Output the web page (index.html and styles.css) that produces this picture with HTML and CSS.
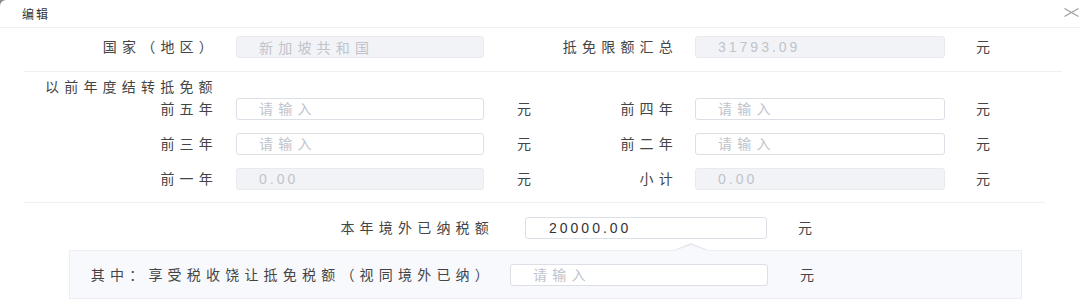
FILE: index.html
```html
<!DOCTYPE html>
<html lang="zh-CN">
<head>
    <meta charset="UTF-8">
    <meta name="viewport" content="width=device-width, initial-scale=1.0">
    <title>编辑</title>
    <link rel="stylesheet" href="styles.css">
</head>
<body>
    <div class="dialog">
        <!-- 标题栏 -->
        <div class="dialog-header">
            <span class="dialog-title">编辑</span>
            <button class="close-btn" type="button" aria-label="关闭">
                <svg width="15" height="9" viewBox="0 0 15 9">
                    <path d="M0.5 0.5 L14.5 8.5 M14.5 0.5 L0.5 8.5" stroke="#9a9ca3" stroke-width="1.1" fill="none"/>
                </svg>
            </button>
        </div>

        <div class="dialog-body">
            <!-- 国家与限额 -->
            <div class="form-grid">
                <label class="form-label">国家（地区）</label>
                <input class="form-input" type="text" value="新加坡共和国" disabled>
                <span></span>
                <label class="form-label">抵免限额汇总</label>
                <input class="form-input is-num" type="text" value="31793.09" disabled>
                <span class="unit">元</span>
            </div>

            <div class="divider"></div>

            <!-- 以前年度结转 -->
            <div class="section-title">以前年度结转抵免额</div>
            <div class="form-grid rows">
                <label class="form-label">前五年</label>
                <input class="form-input" type="text" placeholder="请输入">
                <span class="unit">元</span>
                <label class="form-label">前四年</label>
                <input class="form-input" type="text" placeholder="请输入">
                <span class="unit">元</span>

                <label class="form-label">前三年</label>
                <input class="form-input" type="text" placeholder="请输入">
                <span class="unit">元</span>
                <label class="form-label">前二年</label>
                <input class="form-input" type="text" placeholder="请输入">
                <span class="unit">元</span>

                <label class="form-label">前一年</label>
                <input class="form-input is-num" type="text" value="0.00" disabled>
                <span class="unit">元</span>
                <label class="form-label">小计</label>
                <input class="form-input is-num" type="text" value="0.00" disabled>
                <span class="unit">元</span>
            </div>

            <div class="divider divider-short"></div>

            <!-- 本年境外已纳税额 -->
            <div class="tax-row">
                <label class="form-label">本年境外已纳税额</label>
                <input class="form-input is-num is-filled" type="text" value="20000.00">
                <span class="unit">元</span>
            </div>

            <div class="sub-panel">
                <label class="form-label">其中：享受税收饶让抵免税额（视同境外已纳）</label>
                <input class="form-input" type="text" placeholder="请输入">
                <span class="unit">元</span>
            </div>
        </div>
    </div>
</body>
</html>
```

FILE: styles.css
```css
:root {
    --text-color: #444;
    --muted-color: #c0c4cc;
    --border-color: #dcdfe6;
    --line-color: #eef0f4;
    --disabled-bg: #f2f3f6;
    --panel-bg: #f8f9fc;
}

* {
    box-sizing: border-box;
    margin: 0;
    padding: 0;
}

html {
    background: #8a8a8a;
}

body {
    font-family: "Liberation Sans", "Noto Sans CJK SC", sans-serif;
    font-size: 14px;
    color: var(--text-color);
}

.dialog {
    background: #fff;
    min-height: 100vh;
    border-top-left-radius: 6px;
}

.dialog-header {
    height: 28px;
    display: flex;
    align-items: center;
    justify-content: space-between;
    padding-left: 22px;
    border-bottom: 1px solid var(--line-color);
}

.dialog-title {
    font-size: 12px;
    letter-spacing: 2px;
    color: #333;
}

.close-btn {
    border: none;
    background: none;
    display: flex;
    align-items: center;
    padding: 0 1px 2px 0;
    cursor: pointer;
}

.dialog-body {
    padding-top: 8px;
}

/* 两列表单 */
.form-grid {
    display: grid;
    grid-template-columns: 236px 248px 125px 86px 250px 1fr;
    align-items: center;
}

.form-grid.rows {
    row-gap: 13px;
    margin-top: 3px;
}

.form-label {
    display: flex;
    justify-content: flex-end;
    padding-right: 18px;
    letter-spacing: 5.2px;
    line-height: 16px;
    white-space: nowrap;
}

.form-grid .form-label:nth-child(6n+4) {
    padding-right: 17px;
}

.form-input {
    height: 22px;
    width: 100%;
    border: 1px solid var(--border-color);
    border-radius: 3px;
    background: #fff;
    padding-left: 22px;
    font-family: inherit;
    font-size: 14px;
    letter-spacing: 5.2px;
    color: #333;
    outline: none;
}

.form-input::placeholder {
    color: var(--muted-color);
}

.form-input:disabled {
    background: var(--disabled-bg);
    border-color: #e8eaef;
    color: var(--muted-color);
}

.form-input.is-num {
    letter-spacing: 3px;
}

.form-input.is-filled {
    color: #333;
}

.unit {
    padding-left: 33px;
    line-height: 16px;
}

.form-grid .unit:nth-child(6n) {
    padding-left: 31px;
}

.divider {
    height: 1px;
    background: var(--line-color);
    margin: 13px 18px 0 24px;
}

.divider-short {
    margin: 12px 35px 0 24px;
}

.section-title {
    margin: 7px 0 0 45px;
    line-height: 16px;
    letter-spacing: 5.2px;
}

/* 本年境外已纳税额 */
.tax-row {
    display: grid;
    grid-template-columns: 494px 242px auto;
    column-gap: 31px;
    align-items: center;
    margin-top: 14px;
}

.tax-row .form-label {
    padding-right: 0;
}

.tax-row .form-input {
    padding-left: 23px;
}

.tax-row .unit {
    padding-left: 0;
}

/* 饶让抵免子面板 */
.sub-panel {
    position: relative;
    display: grid;
    grid-template-columns: 440px 258px auto;
    align-items: center;
    width: 953px;
    height: 49px;
    margin: 11px 0 0 69px;
    background: var(--panel-bg);
    border: 1px solid #eceef3;
}

.sub-panel .form-label {
    padding-right: 16px;
}

.sub-panel .unit {
    padding-left: 32px;
}

.sub-panel::before,
.sub-panel::after {
    content: "";
    position: absolute;
    left: 604px;
    border-left: 17px solid transparent;
    border-right: 17px solid transparent;
}

.sub-panel::before {
    top: -8px;
    border-bottom: 7px solid #e6e8ee;
}

.sub-panel::after {
    top: -6px;
    border-bottom: 6px solid var(--panel-bg);
}
```
